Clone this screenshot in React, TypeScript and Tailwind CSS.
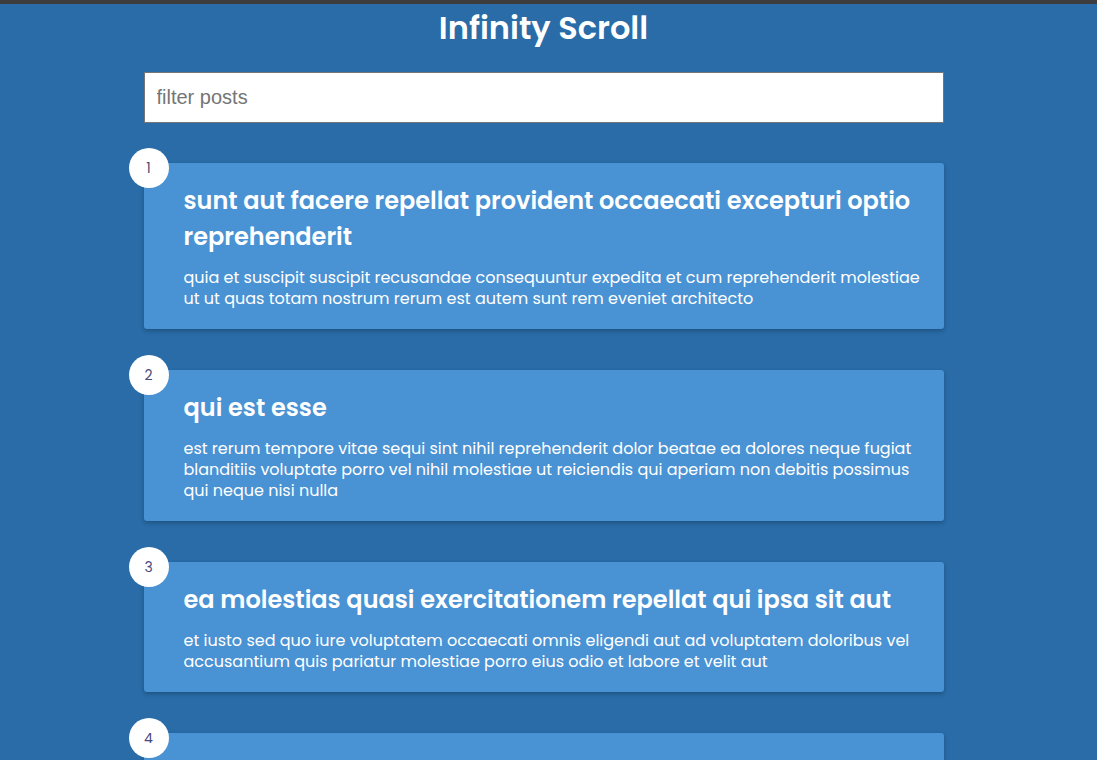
const posts = [
  {
    id: 1,
    title: 'sunt aut facere repellat provident occaecati excepturi optio reprehenderit',
    body: 'quia et suscipit suscipit recusandae consequuntur expedita et cum reprehenderit molestiae ut ut quas totam nostrum rerum est autem sunt rem eveniet architecto',
  },
  {
    id: 2,
    title: 'qui est esse',
    body: 'est rerum tempore vitae sequi sint nihil reprehenderit dolor beatae ea dolores neque fugiat blanditiis voluptate porro vel nihil molestiae ut reiciendis qui aperiam non debitis possimus qui neque nisi nulla',
  },
  {
    id: 3,
    title: 'ea molestias quasi exercitationem repellat qui ipsa sit aut',
    body: 'et iusto sed quo iure voluptatem occaecati omnis eligendi aut ad voluptatem doloribus vel accusantium quis pariatur molestiae porro eius odio et labore et velit aut',
  },
  {
    id: 4,
    title: 'eum et est occaecati',
    body: 'ullam et saepe reiciendis voluptatem adipisci sit amet autem assumenda provident rerum culpa quis hic commodi nesciunt rem tenetur doloremque ipsam iure quis sunt voluptatem rerum illo velit',
  },
]

function Post({ id, title, body }: { id: number; title: string; body: string }) {
  return (
    <div className='relative bg-[#4992d3] rounded-[3px] shadow-[0_2px_4px_rgba(0,0,0,0.25)] pt-5 pb-5 pl-10 pr-4 mb-[41px]'>
      <div className='absolute -left-[15px] -top-[15px] w-10 h-10 rounded-full bg-white flex items-center justify-center text-[14px] text-[#4a4a7a]'>
        {id}
      </div>
      <h2 className='text-[24px] font-semibold leading-[36px] text-white mb-[12px]'>{title}</h2>
      <p className='text-[16px] leading-[21px] text-white'>{body}</p>
    </div>
  )
}

export default function App() {
  return (
    <div className="min-h-screen bg-[#296ca8] border-t-4 border-[#3d3d3d] pr-[10px] font-['Poppins','Open_Sans',sans-serif]">
      <h1 className='text-center text-[32px] font-semibold text-white leading-[46px] pt-[1px]'>Infinity Scroll</h1>
      <div className='w-[800px] mx-auto mt-[21px]'>
        <input
          type='text'
          placeholder='filter posts'
          className="w-full h-[51px] bg-white border border-[#767676] px-3 text-[20px] font-['Liberation_Sans',sans-serif] placeholder:text-[#757575] outline-none mb-10"
        />
        {posts.map((p) => (
          <Post key={p.id} {...p} />
        ))}
      </div>
    </div>
  )
}
